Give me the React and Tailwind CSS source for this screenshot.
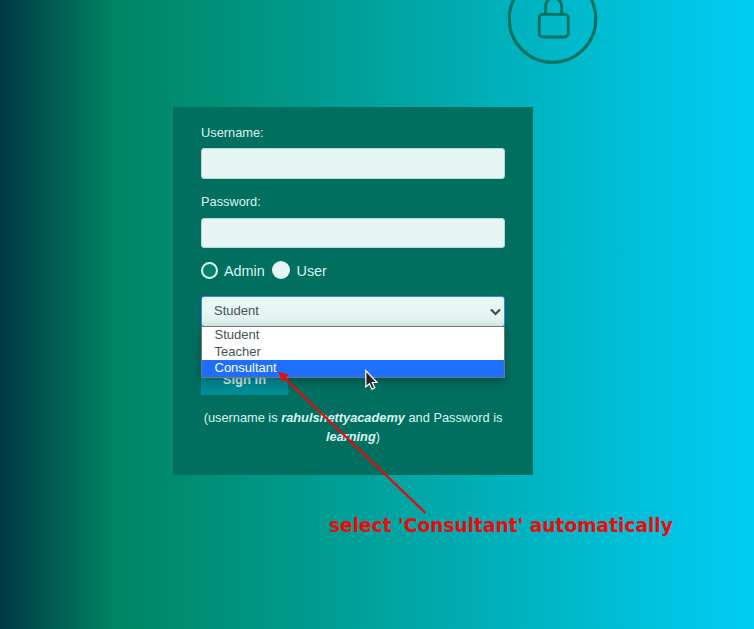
const options = ['Student', 'Teacher', 'Consultant'];

function LockBadge() {
  return (
    <svg className="absolute left-[506px] top-0" width="94" height="66" viewBox="0 0 94 66" fill="none" stroke="#08705f">
      <circle cx="46.5" cy="19" r="43.3" strokeWidth="3" />
      <rect x="33.2" y="14.4" width="29" height="22.6" rx="3.5" strokeWidth="2.8" />
      <path d="M39.5 14.4V7c0-4 1.8-6.5 4-7.8M55.7 14.4V7c0-4-1.8-6.5-4-7.8" strokeWidth="2.8" />
    </svg>
  );
}

function Field({ label, type, className, inputClass }) {
  return (
    <label className={className}>
      <span className="block h-[18px] text-[12.8px] leading-[18px]">{label}</span>
      <input
        type={type}
        className={`block w-full rounded-[3px] border border-[#b5d8d4] bg-[#e5f5f4] outline-none ${inputClass}`}
      />
    </label>
  );
}

function RoleSelect() {
  return (
    <div className="relative z-10 mt-[15px]">
      <div className="flex h-[31px] items-center justify-between rounded-[3px] border border-[#3f8cc0] bg-linear-to-b from-[#e6f7f6] from-50% to-[#dcedec] pr-[3px] pl-[12px] text-[13px] text-[#495057] shadow-[0_0_2px_1px_#08657a]">
        <span className="mb-[2px]">Student</span>
        <svg width="11" height="8" viewBox="0 0 11 8" fill="none" stroke="#3f4a50" strokeWidth="2.2">
          <path d="M1 1.5 5.5 6 10 1.5" />
        </svg>
      </div>
      <ul className="absolute top-[30px] left-0 w-full border border-[#77777a] bg-white text-[13px] leading-[16.5px] text-[#495057] shadow-[0_4px_9px_rgba(0,30,30,0.35)]">
        {options.map((name) => (
          <li
            key={name}
            className={name === 'Consultant' ? 'h-[17px] bg-[#1e6fff] pl-[12.5px] leading-[16px] text-white' : 'h-[16.5px] pl-[12.5px]'}
          >
            {name}
          </li>
        ))}
      </ul>
    </div>
  );
}

export default function App() {
  return (
    <main className="relative h-[629px] w-[754px] overflow-hidden bg-[linear-gradient(90deg,#003845_0px,#008562_115px,#00cdf4_754px)] pt-[107px] pl-[173px] font-['Liberation_Sans',Arial,sans-serif]">
      <LockBadge />
      <form className="flex h-[368px] w-[360px] flex-col bg-[#006f60] px-[28px] pt-[17px] text-[#d9f3ef]">
        <Field label="Username:" type="text" inputClass="mt-[6px] h-[31px]" />
        <Field label="Password:" type="password" className="mt-[14px]" inputClass="mt-[7px] h-[30px]" />
        <div className="mt-[12px] flex h-[21px] items-center text-[14.4px]">
          <span className="mb-px size-[17px] rounded-full border-2 border-[#dff3f1] bg-[#00856a]" />
          <span className="mt-[2px] ml-[6px] w-[48px]">Admin</span>
          <span className="mb-px size-[18px] rounded-full bg-[#e5f5f4]" />
          <span className="mt-[2px] ml-[6.5px]">User</span>
        </div>
        <RoleSelect />
        <button type="button" className="mt-[37px] h-[31px] w-[87px] shrink-0 bg-[#008c98] text-[13px] font-bold">
          Sign In
        </button>
        <p className="mt-[13px] text-center text-[12.8px] leading-[19px] whitespace-nowrap">
          (username is <b className="italic">rahulshettyacademy</b> and Password is
          <br />
          <b className="italic">learning</b>)
        </p>
      </form>
      <p className="mt-[39px] ml-[156px] font-['DejaVu_Sans',sans-serif] text-[18.6px] leading-[24px] font-bold whitespace-nowrap text-[#ee0a0a]">
        select 'Consultant' automatically
      </p>
      <svg className="absolute top-0 left-0 z-20" width="754" height="629" viewBox="0 0 754 629">
        <path d="M425.5 513 284 377.5" stroke="#e60c0c" strokeWidth="2.3" />
        <path d="M278.5 372 289 374.5 282 382Z" fill="#e60c0c" />
        <path
          d="M365.8 370.5v16.5l3.6-3.2 2.6 5.3 2.8-1.3-2.6-5.3h4.8Z"
          fill="#26262b"
          stroke="#fff"
          strokeWidth="1.2"
        />
      </svg>
    </main>
  );
}
